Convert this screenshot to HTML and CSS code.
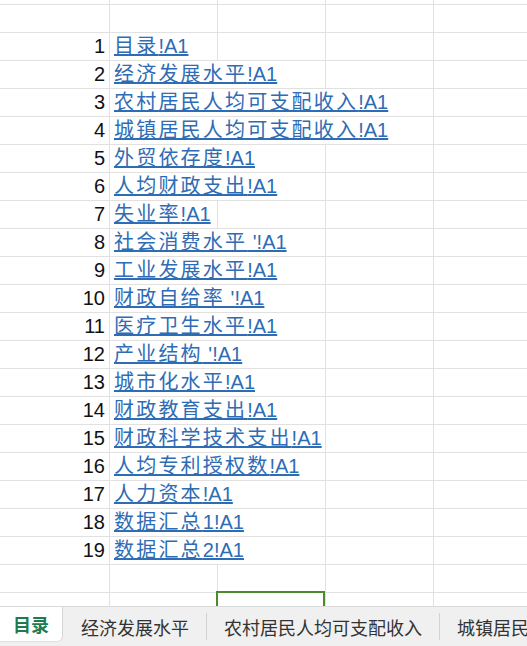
FILE: index.html
```html
<!DOCTYPE html>
<html lang="zh-CN">
<head>
	<meta charset="utf-8">
	<title>目录</title>
	<link rel="stylesheet" href="styles.css">
</head>
<body>

	<div class="sheet">
		<div class="grid">
			<!-- two blank rows above the list -->
			<div class="row"><div class="cell"></div><div class="cell"></div><div class="cell"></div><div class="cell"></div><div class="cell"></div></div>
			<div class="row"><div class="cell"></div><div class="cell"></div><div class="cell"></div><div class="cell"></div><div class="cell"></div></div>

			<div class="row"><div class="cell num">1</div><div class="cell link-cell"><a href="#">目录<span class="ref">!A1</span></a></div><div class="cell"></div><div class="cell"></div><div class="cell"></div></div>
			<div class="row"><div class="cell num">2</div><div class="cell link-cell span2"><a href="#">经济发展水平<span class="ref">!A1</span></a></div><div class="cell"></div><div class="cell"></div></div>
			<div class="row"><div class="cell num">3</div><div class="cell link-cell span3"><a href="#">农村居民人均可支配收入<span class="ref">!A1</span></a></div><div class="cell"></div></div>
			<div class="row"><div class="cell num">4</div><div class="cell link-cell span3"><a href="#">城镇居民人均可支配收入<span class="ref">!A1</span></a></div><div class="cell"></div></div>
			<div class="row"><div class="cell num">5</div><div class="cell link-cell span2"><a href="#">外贸依存度<span class="ref">!A1</span></a></div><div class="cell"></div><div class="cell"></div></div>
			<div class="row"><div class="cell num">6</div><div class="cell link-cell span2"><a href="#">人均财政支出<span class="ref">!A1</span></a></div><div class="cell"></div><div class="cell"></div></div>
			<div class="row"><div class="cell num">7</div><div class="cell link-cell"><a href="#">失业率<span class="ref">!A1</span></a></div><div class="cell"></div><div class="cell"></div><div class="cell"></div></div>
			<div class="row"><div class="cell num">8</div><div class="cell link-cell span2"><a href="#">社会消费水平<span class="ref"> '!A1</span></a></div><div class="cell"></div><div class="cell"></div></div>
			<div class="row"><div class="cell num">9</div><div class="cell link-cell span2"><a href="#">工业发展水平<span class="ref">!A1</span></a></div><div class="cell"></div><div class="cell"></div></div>
			<div class="row"><div class="cell num">10</div><div class="cell link-cell span2"><a href="#">财政自给率<span class="ref"> '!A1</span></a></div><div class="cell"></div><div class="cell"></div></div>
			<div class="row"><div class="cell num">11</div><div class="cell link-cell span2"><a href="#">医疗卫生水平<span class="ref">!A1</span></a></div><div class="cell"></div><div class="cell"></div></div>
			<div class="row"><div class="cell num">12</div><div class="cell link-cell span2"><a href="#">产业结构<span class="ref"> '!A1</span></a></div><div class="cell"></div><div class="cell"></div></div>
			<div class="row"><div class="cell num">13</div><div class="cell link-cell span2"><a href="#">城市化水平<span class="ref">!A1</span></a></div><div class="cell"></div><div class="cell"></div></div>
			<div class="row"><div class="cell num">14</div><div class="cell link-cell span2"><a href="#">财政教育支出<span class="ref">!A1</span></a></div><div class="cell"></div><div class="cell"></div></div>
			<div class="row"><div class="cell num">15</div><div class="cell link-cell span2"><a href="#">财政科学技术支出<span class="ref">!A1</span></a></div><div class="cell"></div><div class="cell"></div></div>
			<div class="row"><div class="cell num">16</div><div class="cell link-cell span2"><a href="#">人均专利授权数<span class="ref">!A1</span></a></div><div class="cell"></div><div class="cell"></div></div>
			<div class="row"><div class="cell num">17</div><div class="cell link-cell span2"><a href="#">人力资本<span class="ref">!A1</span></a></div><div class="cell"></div><div class="cell"></div></div>
			<div class="row"><div class="cell num">18</div><div class="cell link-cell span2"><a href="#">数据汇总<span class="ref">1!A1</span></a></div><div class="cell"></div><div class="cell"></div></div>
			<div class="row"><div class="cell num">19</div><div class="cell link-cell span2"><a href="#">数据汇总<span class="ref">2!A1</span></a></div><div class="cell"></div><div class="cell"></div></div>

			<div class="row"><div class="cell"></div><div class="cell"></div><div class="cell"></div><div class="cell"></div><div class="cell"></div></div>
			<div class="row"><div class="cell"></div><div class="cell"></div><div class="cell selected"><div class="cursor"></div></div><div class="cell"></div><div class="cell"></div></div>
		</div>
	</div>

	<div class="tabs">
		<div class="tab active">目录</div>
		<div class="tab">经济发展水平</div>
		<span class="sep"></span>
		<div class="tab">农村居民人均可支配收入</div>
		<span class="sep"></span>
		<div class="tab">城镇居民</div>
	</div>

</body>
</html>
```

FILE: styles.css
```css
html, body {
	margin: 0;
	padding: 0;
}
body {
	width: 527px;
	height: 646px;
	overflow: hidden;
	background: #fff;
	font-family: "Liberation Sans", "Noto Sans CJK SC", sans-serif;
	display: flex;
	flex-direction: column;
}

/* worksheet area, scrolled a bit so the first row is cut */
.sheet {
	flex: 1;
	overflow: hidden;
}
.grid {
	margin-top: -23px;
}
.row {
	display: grid;
	grid-template-columns: 110px repeat(4, 108px);
	height: 28px;
}
.cell {
	box-sizing: border-box;
	height: 28px;
	border-right: 1px solid #e1e1e1;
	border-bottom: 1px solid #e1e1e1;
}
.span2 {
	grid-column: span 2;
}
.span3 {
	grid-column: span 3;
}

.num {
	text-align: right;
	padding-right: 4px;
	font-size: 20px;
	line-height: 27px;
	color: #111;
}
.link-cell {
	padding-left: 4px;
	white-space: nowrap;
	font-size: 20px;
	line-height: 27px;
}
.link-cell a {
	color: #2e6cb5;
	text-decoration: underline;
	letter-spacing: 2.2px;
}
.link-cell .ref {
	letter-spacing: 0;
}

/* current cell */
.selected {
	position: relative;
}
.cursor {
	position: absolute;
	left: -2px;
	top: -2px;
	right: 0;
	bottom: -1px;
	border: 2px solid #4a8b2c;
}

/* sheet tabs */
.tabs {
	height: 40px;
	box-sizing: border-box;
	display: flex;
	overflow: hidden;
	background: #f0f0f0;
	border-top: 1px solid #dadada;
	font-family: "Noto Sans CJK SC", sans-serif;
	font-size: 18px;
	color: #333;
	white-space: nowrap;
}
.tab {
	flex: none;
	display: flex;
	align-items: center;
	padding: 0 17px;
}
.tab.active {
	width: 63px;
	box-sizing: border-box;
	justify-content: center;
	padding: 0;
	margin-top: -1px;
	margin-bottom: 4px;
	background: #fff;
	color: #1f7a4f;
	font-weight: bold;
	border-right: 1px solid #d6d6d6;
	border-bottom: 1px solid #e0e0e0;
	border-bottom-right-radius: 6px;
}
.tab.active + .tab {
	padding-left: 18px;
}
.sep {
	flex: none;
	width: 1px;
	margin: 6px 0;
	background: #d2d2d2;
}
```
